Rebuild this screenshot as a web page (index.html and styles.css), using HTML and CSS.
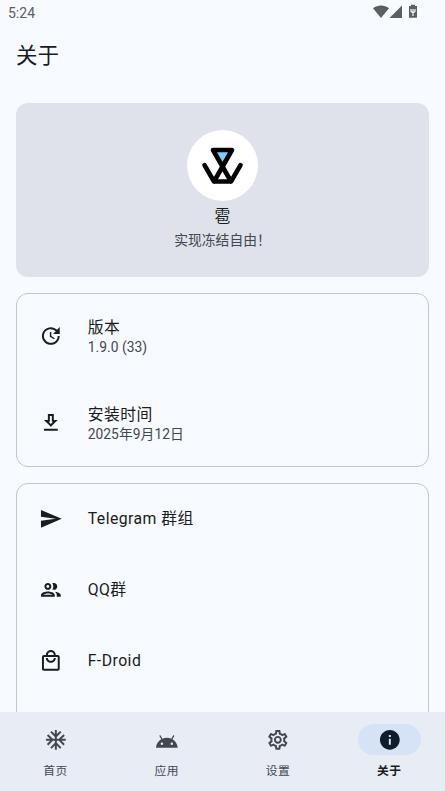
FILE: index.html
```html
<!DOCTYPE html>
<html lang="zh-CN">
<head>
<meta charset="utf-8">
<title>关于</title>
<link rel="stylesheet" href="styles.css">
</head>
<body>
<div class="screen">
  <header class="status">
    <span class="clock">5:24</span>
    <svg class="status-icons" viewBox="0 0 46 16">
      <path d="M0 4.200C4.600.6 11.400.6 16 4.200L8 14z"/>
      <path d="M29 1.500V14H16.500z"/>
      <path d="M36 2h2V.8h4V2h2v11.800h-8z"/>
      <path class="bolt" d="M40 5v7M38 5v2.500l2 1.500 2-1.500V5"/>
    </svg>
  </header>
  <h1 class="title">关于</h1>
  <main class="content">
    <section class="hero">
      <div class="logo">
        <svg viewBox="0 0 71 71">
          <path class="ice" d="M25.700 20h19.600L35.500 36z"/>
          <path class="mark" d="M17.500 35.200L27 51.500h17L53.500 35.200M27 51.500L45 20H26L44 51.500"/>
        </svg>
      </div>
      <div class="name">雹</div>
      <div class="slogan">实现冻结自由！</div>
    </section>
    <section class="card">
      <div class="row tall">
        <svg class="icon" viewBox="0 0 24 24"><path d="M21 10.120h-6.780l2.740-2.820c-2.730-2.700-7.150-2.800-9.880-.1-2.730 2.710-2.730 7.080 0 9.790s7.150 2.710 9.880 0C18.320 15.650 19 14.080 19 12.100h2c0 1.980-.88 4.550-2.640 6.290-3.510 3.480-9.210 3.480-12.720 0-3.500-3.470-3.530-9.110-.02-12.580s9.140-3.470 12.650 0L21 3v7.120zM12.500 8v4.250l3.500 2.080-.72 1.210L11 13V8h1.500z"/></svg>
        <div><div class="label">版本</div><div class="detail">1.9.0 (33)</div></div>
      </div>
      <div class="row tall">
        <svg class="icon" viewBox="0 0 24 24"><path d="M19 9h-4V3H9v6H5l7 7 7-7zm-8 2V5h2v6h1.170L12 13.170 9.830 11H11zm-6 7h14v2H5z"/></svg>
        <div><div class="label">安装时间</div><div class="detail">2025年9月12日</div></div>
      </div>
    </section>
    <section class="card links">
      <div class="row">
        <svg class="icon" viewBox="0 0 24 24"><path d="M2.010 21L23 12 2.010 3 2 10l15 2-15 2z"/></svg>
        <div class="label">Telegram 群组</div>
      </div>
      <div class="row">
        <svg class="icon" viewBox="0 0 24 24"><path d="M9 13.750c-2.340 0-7 1.170-7 3.500V19h14v-1.750c0-2.330-4.660-3.500-7-3.500zM4.340 17c.84-.58 2.870-1.250 4.660-1.250s3.820.67 4.660 1.250H4.340zM9 12c1.930 0 3.500-1.570 3.500-3.500S10.930 5 9 5 5.500 6.570 5.500 8.500 7.070 12 9 12zm0-5c.83 0 1.500.67 1.500 1.500S9.830 10 9 10s-1.500-.67-1.500-1.500S8.170 7 9 7zm7.040 6.810c1.160.84 1.960 1.960 1.960 3.440V19h4v-1.750c0-2.020-3.500-3.170-5.960-3.440zM15 12c1.930 0 3.500-1.570 3.500-3.500S16.930 5 15 5c-.54 0-1.040.13-1.500.35.63.89 1 1.980 1 3.150s-.37 2.260-1 3.150c.46.220.96.350 1.500.350z"/></svg>
        <div class="label">QQ群</div>
      </div>
      <div class="row">
        <svg class="icon" viewBox="0 0 24 24"><path d="M19 6h-2c0-2.760-2.240-5-5-5S7 3.240 7 6H5c-1.100 0-1.990.9-1.990 2L3 20c0 1.100.9 2 2 2h14c1.100 0 2-.9 2-2V8c0-1.100-.9-2-2-2zm-7-3c1.660 0 3 1.340 3 3H9c0-1.660 1.340-3 3-3zm7 17H5V8h14v12zm-7-8c-1.660 0-3-1.340-3-3H7c0 2.760 2.240 5 5 5s5-2.240 5-5h-2c0 1.660-1.340 3-3 3z"/></svg>
        <div class="label">F-Droid</div>
      </div>
      <div class="row"></div>
    </section>
  </main>
  <nav class="nav">
    <div class="tab"><span class="pill"><svg class="icon" viewBox="0 0 24 24"><path d="M22 11h-4.170l3.240-3.240-1.410-1.420L15 11h-2V9l4.660-4.660-1.420-1.410L13 6.170V2h-2v4.170L7.760 2.930 6.340 4.340 11 9v2H9L4.340 6.340 2.930 7.760 6.170 11H2v2h4.170l-3.240 3.240 1.410 1.420L9 13h2v2l-4.660 4.660 1.420 1.410L11 17.830V22h2v-4.170l3.240 3.240 1.420-1.410L13 15v-2h2l4.660 4.660 1.410-1.420L17.830 13H22z"/></svg></span><span>首页</span></div>
    <div class="tab"><span class="pill"><svg class="icon" viewBox="0 0 24 24"><path d="M17.600 11.480l1.840-3.180c.16-.31.040-.69-.26-.85-.29-.15-.65-.06-.83.220l-1.880 3.240c-2.860-1.210-6.080-1.210-8.940 0L5.650 7.670c-.19-.29-.58-.38-.87-.2-.28.180-.37.540-.22.830L6.400 11.480C3.300 13.250 1.280 16.440 1 20h22c-.28-3.560-2.300-6.750-5.400-8.520zM7 17.250c-.69 0-1.250-.56-1.250-1.250S6.310 14.750 7 14.750 8.250 15.310 8.250 16 7.690 17.250 7 17.250zm10 0c-.69 0-1.250-.56-1.250-1.250s.56-1.250 1.250-1.250 1.250.56 1.250 1.250-.56 1.250-1.250 1.250z"/></svg></span><span>应用</span></div>
    <div class="tab"><span class="pill"><svg class="icon" viewBox="0 0 24 24"><path d="M19.430 12.980c.04-.32.070-.64.070-.98s-.03-.66-.07-.98l2.110-1.650c.19-.15.240-.42.120-.64l-2-3.460c-.09-.16-.26-.25-.44-.25-.06 0-.12.010-.17.030l-2.490 1c-.52-.4-1.080-.73-1.690-.98l-.38-2.650C14.460 2.180 14.250 2 14 2h-4c-.25 0-.46.180-.49.420l-.38 2.650c-.61.250-1.170.590-1.690.98l-2.490-1c-.06-.02-.12-.03-.18-.03-.17 0-.34.090-.43.250l-2 3.460c-.13.220-.07.490.120.640l2.110 1.650c-.04.320-.07.650-.07.980s.03.660.070.980l-2.110 1.650c-.19.150-.24.420-.12.640l2 3.460c.09.160.26.250.44.250.06 0 .12-.01.170-.03l2.490-1c.52.400 1.080.730 1.690.980l.38 2.650c.03.240.240.420.490.420h4c.25 0 .46-.18.490-.42l.38-2.650c.61-.25 1.170-.59 1.690-.98l2.490 1c.06.020.12.030.18.030.17 0 .34-.09.430-.25l2-3.460c.12-.22.070-.49-.12-.64l-2.110-1.650zm-1.980-1.710c.04.310.050.520.050.730s-.02.430-.05.730l-.14 1.130.89.700 1.080.84-.7 1.210-1.270-.51-1.040-.42-.9.680c-.43.320-.84.560-1.250.73l-1.060.43-.16 1.130-.2 1.350h-1.400l-.19-1.350-.16-1.130-1.060-.43c-.43-.18-.83-.41-1.230-.71l-.91-.7-1.060.43-1.270.51-.7-1.210 1.080-.84.890-.7-.14-1.130c-.03-.31-.05-.54-.05-.74s.02-.43.050-.73l.14-1.130-.89-.7-1.080-.84.700-1.210 1.270.51 1.040.42.900-.68c.43-.32.840-.56 1.250-.73l1.060-.43.160-1.130.200-1.350h1.390l.19 1.350.16 1.130 1.060.43c.43.180.83.410 1.230.71l.91.700 1.060-.43 1.270-.51.700 1.210-1.070.85-.89.700.14 1.130zM12 8c-2.210 0-4 1.790-4 4s1.790 4 4 4 4-1.790 4-4-1.790-4-4-4zm0 6c-1.100 0-2-.9-2-2s.9-2 2-2 2 .9 2 2-.9 2-2 2z"/></svg></span><span>设置</span></div>
    <div class="tab active"><span class="pill"><svg class="icon" viewBox="0 0 24 24"><path d="M12 2C6.480 2 2 6.480 2 12s4.480 10 10 10 10-4.480 10-10S17.520 2 12 2zm1 15h-2v-6h2v6zm0-8h-2V7h2v2z"/></svg></span><span>关于</span></div>
  </nav>
</div>
</body>
</html>
```
FILE: styles.css
```css
* { box-sizing: border-box; }
body {
  margin: 0;
  background: #f7faff;
  color: #191c20;
  font-family: Roboto, "Noto Sans CJK SC", sans-serif;
}
.screen {
  height: 791px;
  display: flex;
  flex-direction: column;
  overflow: hidden;
}
.status {
  flex: none;
  height: 24px;
  padding: 1px 26px 0 8px;
  display: flex;
  align-items: center;
  justify-content: space-between;
  color: #5c5e62;
  font-size: 14px;
}
.status-icons { width: 46px; height: 16px; margin-bottom: 1px; fill: #5c5e62; }
.status-icons .bolt { fill: none; stroke: #f7faff; stroke-width: 1.2; }
.title {
  flex: none;
  margin: 0;
  height: 79px;
  padding: 16px 16px 0;
  font-size: 21.500px;
  line-height: 32px;
  font-weight: 400;
}
.content {
  flex: 1;
  min-height: 0;
  overflow: hidden;
  padding: 0 16px;
  display: flex;
  flex-direction: column;
  gap: 16px;
}
.hero {
  flex: none;
  height: 174px;
  padding-top: 27px;
  border-radius: 12px;
  background: #dfe2eb;
  display: flex;
  flex-direction: column;
  align-items: center;
}
.logo {
  width: 71px;
  height: 71px;
  border-radius: 50%;
  background: #fff;
}
.logo svg { display: block; }
.ice { fill: #78d1fb; }
.mark {
  fill: none;
  stroke: #000;
  stroke-width: 4.6;
  stroke-linecap: round;
  stroke-linejoin: round;
}
.name { margin-top: 4px; font-size: 15.800px; line-height: 24px; }
.slogan {
  font-size: 13.800px;
  line-height: 20px;
  margin-top: 1px;
  color: #43474e;
}
.card {
  flex: none;
  border: 1px solid #c3c6cf;
  border-radius: 12px;
}
.row {
  height: 71px;
  padding-left: 22px;
  display: flex;
  align-items: center;
  gap: 25px;
}
.row.tall { height: 86px; padding-bottom: 2px; }
.row.tall + .row.tall { padding-bottom: 0; }
.links .row:first-child { height: 70px; padding-bottom: 1px; }
.icon { width: 23.700px; height: 23.700px; flex: none; fill: currentColor; }
.label { font-size: 15.800px; line-height: 23px; letter-spacing: .45px; }
.detail {
  font-size: 13.800px;
  line-height: 17px;
  letter-spacing: .05px;
  color: #43474e;
}
.nav {
  flex: none;
  height: 79px;
  padding-top: 12px;
  background: #e8ecf5;
  display: flex;
}
.tab {
  flex: 1;
  display: flex;
  flex-direction: column;
  align-items: center;
  gap: 7px;
  color: #43474e;
  font-size: 11.800px;
  line-height: 18px;
  letter-spacing: .5px;
}
.pill {
  width: 63px;
  height: 31px;
  border-radius: 16px;
  display: flex;
  align-items: center;
  justify-content: center;
}
.active { color: #191c20; font-weight: 700; }
.active .pill { background: #d6e3f7; color: #101c2b; }
```
